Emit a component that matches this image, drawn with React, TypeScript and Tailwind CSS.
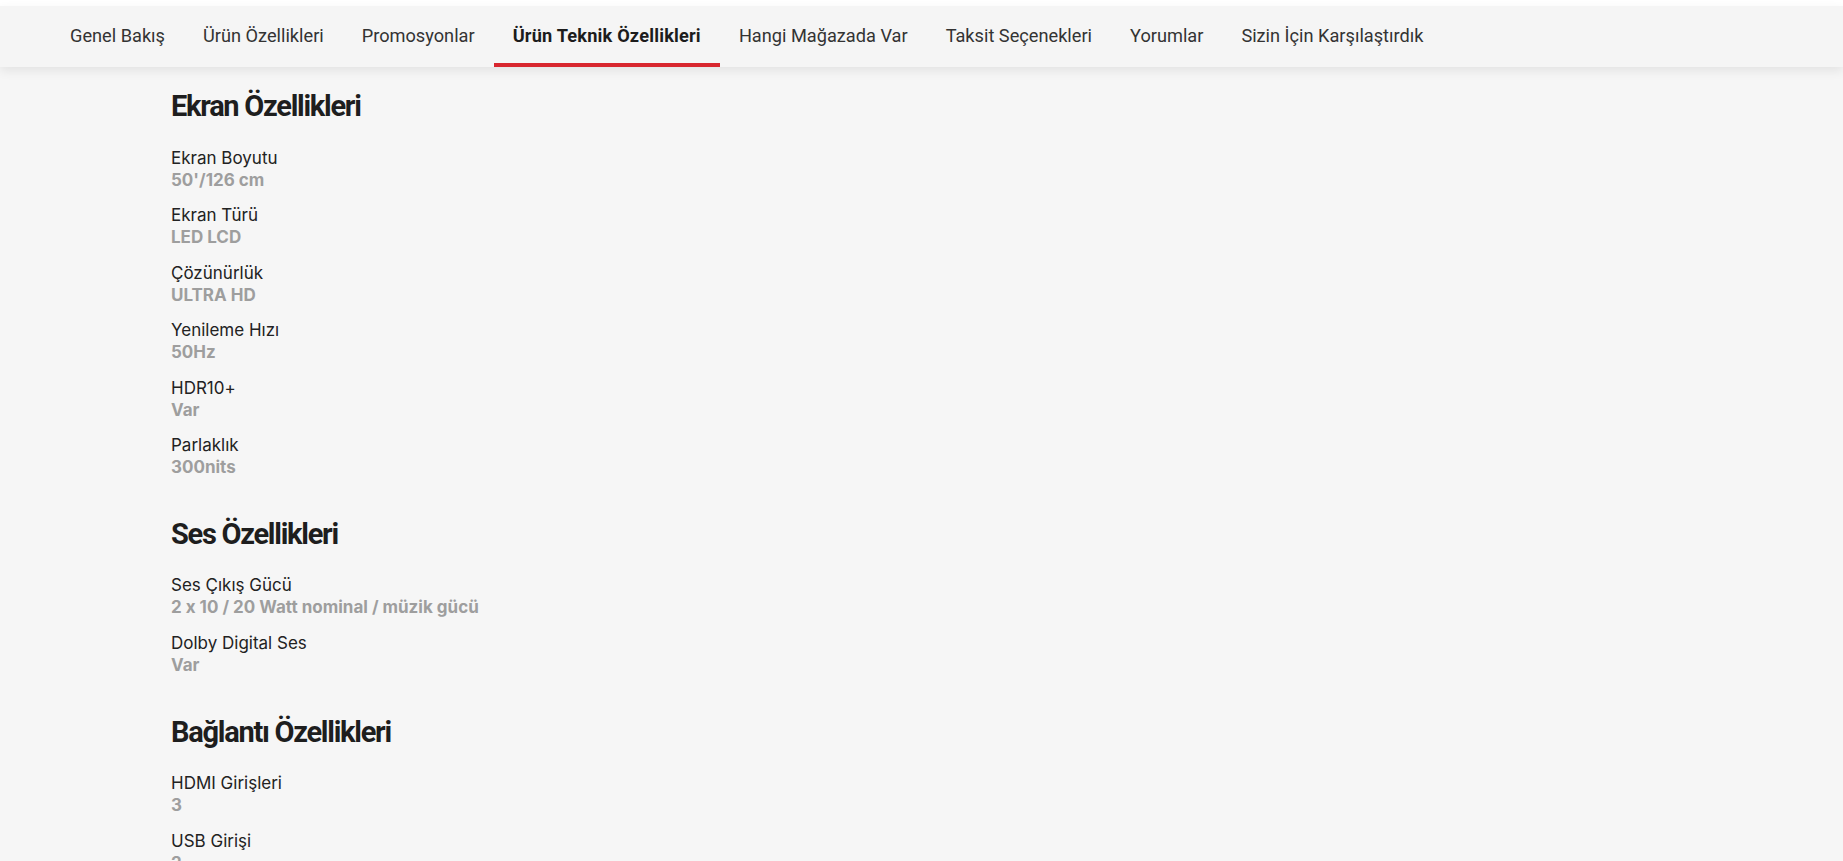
const tabs = [
  "Genel Bakış",
  "Ürün Özellikleri",
  "Promosyonlar",
  "Ürün Teknik Özellikleri",
  "Hangi Mağazada Var",
  "Taksit Seçenekleri",
  "Yorumlar",
  "Sizin İçin Karşılaştırdık",
];

const active = "Ürün Teknik Özellikleri";

type Spec = { label: string; value: string };

const sections: { title: string; specs: Spec[] }[] = [
  {
    title: "Ekran Özellikleri",
    specs: [
      { label: "Ekran Boyutu", value: "50'/126 cm" },
      { label: "Ekran Türü", value: "LED LCD" },
      { label: "Çözünürlük", value: "ULTRA HD" },
      { label: "Yenileme Hızı", value: "50Hz" },
      { label: "HDR10+", value: "Var" },
      { label: "Parlaklık", value: "300nits" },
    ],
  },
  {
    title: "Ses Özellikleri",
    specs: [
      { label: "Ses Çıkış Gücü", value: "2 x 10 / 20 Watt nominal / müzik gücü" },
      { label: "Dolby Digital Ses", value: "Var" },
    ],
  },
  {
    title: "Bağlantı Özellikleri",
    specs: [
      { label: "HDMI Girişleri", value: "3" },
      { label: "USB Girişi", value: "2" },
      { label: "Ethernet", value: "Var" },
    ],
  },
];

function TabBar() {
  return (
    <div className="bg-white pt-[6px]">
      <nav className="relative z-10 h-[61px] bg-[#f5f5f5] shadow-[0_4px_10px_rgba(0,0,0,0.08)]">
        <ul className="flex h-full pl-[51px] font-['Roboto',sans-serif] text-[18.2px]">
          {tabs.map((t) => (
            <li
              key={t}
              className={
                t === active
                  ? "flex h-full items-center border-b-4 border-[#d8262e] px-[19px] pt-[2px] font-bold tracking-[0.01em] text-[#1c1c1c]"
                  : "flex h-full items-center border-b-4 border-transparent px-[19px] pt-[2px] text-[#333333]"
              }
            >
              {t}
            </li>
          ))}
        </ul>
      </nav>
    </div>
  );
}

export default function App() {
  return (
    <div className="h-[861px] overflow-hidden bg-[#f6f6f6]">
      <TabBar />
      <main className="flex flex-col gap-[38.5px] pl-[171px] pt-[22px]">
        {sections.map((s) => (
          <section key={s.title}>
            <h2 className="mb-[23.5px] font-['Roboto',sans-serif] text-[29px] font-bold leading-[34px] tracking-[-0.044em] text-[#1e1e1e]">
              {s.title}
            </h2>
            <dl className="flex flex-col gap-[13.6px] font-['Inter',sans-serif] text-[17px] leading-[22px] [font-feature-settings:'calt'_0]">
              {s.specs.map((sp) => (
                <div key={sp.label}>
                  <dt className="text-[#222222]">{sp.label}</dt>
                  <dd className="font-bold text-[#9e9e9e]">{sp.value}</dd>
                </div>
              ))}
            </dl>
          </section>
        ))}
      </main>
    </div>
  );
}
